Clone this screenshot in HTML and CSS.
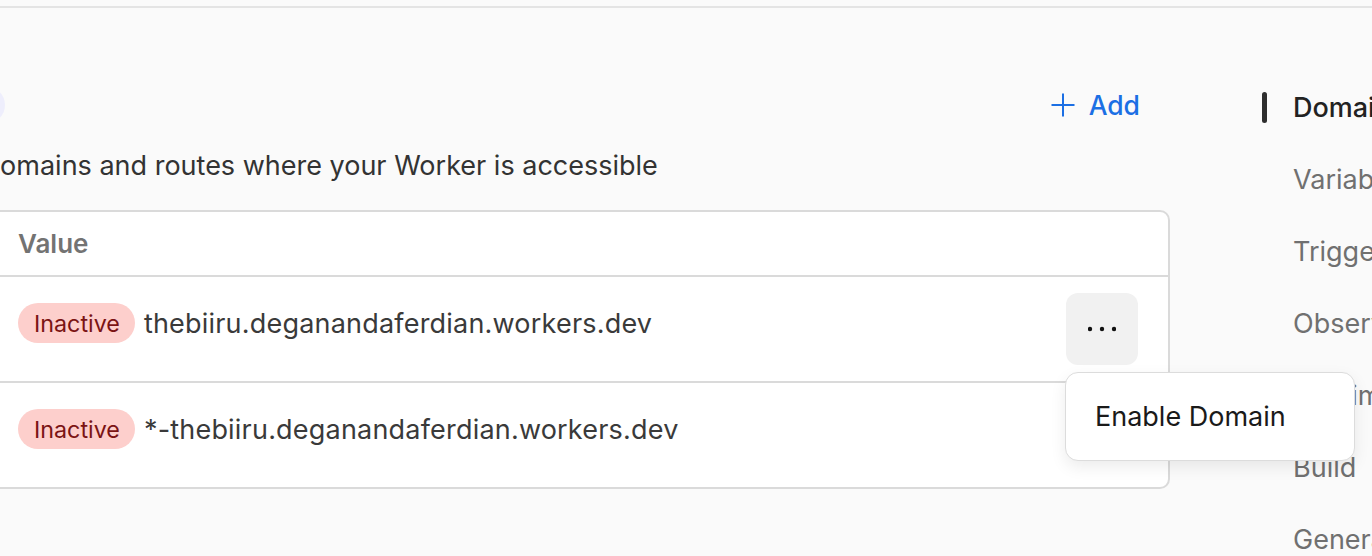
FILE: index.html
```html
<!DOCTYPE html>
<html lang="en">
<head>
<meta charset="utf-8">
<title>Domains &amp; Routes</title>
<link rel="stylesheet" href="styles.css">
</head>
<body>
<div class="topbar"></div>
<div class="layout">
  <main class="main">
    <div class="title-row">
      <div class="title-group">
        <h2 class="title">Domains &amp; Routes</h2>
        <span class="info-pill"></span>
      </div>
      <button class="add-btn" type="button">
        <svg class="plus" width="24" height="24" viewBox="0 0 24 24" aria-hidden="true">
          <path d="M12 0.5V23.5M0.5 12H23.5" stroke="currentColor" stroke-width="2" fill="none"/>
        </svg>
        <span>Add</span>
      </button>
    </div>
    <p class="desc">Define the domains, subdomains and routes where your Worker is accessible</p>

    <div class="table">
      <div class="trow thead">
        <div class="cell type">Type</div>
        <div class="cell value">Value</div>
        <div class="cell action"></div>
      </div>
      <div class="trow">
        <div class="cell type">workers.dev</div>
        <div class="cell value">
          <span class="badge">Inactive</span>
          <span class="domain">thebiiru.deganandaferdian.workers.dev</span>
        </div>
        <div class="cell action">
          <div class="menu-wrap">
            <button class="more-btn active" type="button" aria-label="More">
              <svg width="28" height="6" viewBox="0 0 28 6" aria-hidden="true">
                <circle cx="2" cy="3" r="2.2" fill="#111"/>
                <circle cx="14" cy="3" r="2.2" fill="#111"/>
                <circle cx="26" cy="3" r="2.2" fill="#111"/>
              </svg>
            </button>
            <div class="dropdown">Enable Domain</div>
          </div>
        </div>
      </div>
      <div class="trow">
        <div class="cell type">Preview URLs</div>
        <div class="cell value">
          <span class="badge">Inactive</span>
          <span class="domain">*-thebiiru.deganandaferdian.workers.dev</span>
        </div>
        <div class="cell action">
          <button class="more-btn" type="button" aria-label="More">
            <svg width="28" height="6" viewBox="0 0 28 6" aria-hidden="true">
              <circle cx="2" cy="3" r="2.2" fill="#111"/>
              <circle cx="14" cy="3" r="2.2" fill="#111"/>
              <circle cx="26" cy="3" r="2.2" fill="#111"/>
            </svg>
          </button>
        </div>
      </div>
    </div>
  </main>

  <nav class="sidenav">
    <a class="nav-item active">Domains &amp; Routes</a>
    <a class="nav-item">Variables and Secrets</a>
    <a class="nav-item">Trigger Events</a>
    <a class="nav-item">Observability</a>
    <a class="nav-item">Runtime</a>
    <a class="nav-item">Build</a>
    <a class="nav-item">General</a>
  </nav>
</div>
</body>
</html>
```

FILE: styles.css
```css
* { box-sizing: border-box; }

html, body {
  margin: 0;
  padding: 0;
}

body {
  width: 1372px;
  height: 556px;
  overflow: hidden;
  background: #fafafa;
  font-family: Inter, "Noto Sans", "Liberation Sans", sans-serif;
  font-size: 27px;
  color: #313131;
}

.topbar {
  height: 8px;
  border-bottom: 2px solid #e4e4e4;
}

.layout {
  display: flex;
  align-items: flex-start;
  padding-top: 77px;
}

.main {
  flex: none;
  width: 1496px;
  margin-left: -326px;
}

.title-row {
  display: flex;
  align-items: center;
  justify-content: space-between;
  height: 40px;
}

.title-group {
  display: flex;
  align-items: center;
  gap: 22px;
}

.title {
  margin: 0;
  font-size: 31px;
  font-weight: 600;
  color: #222;
}

.info-pill {
  width: 38px;
  height: 38px;
  border-radius: 50%;
  background: #eeeefc;
}

.add-btn {
  display: flex;
  align-items: center;
  gap: 14px;
  margin-right: 30px;
  padding: 0;
  border: 0;
  background: none;
  font: inherit;
  font-size: 26.5px;
  font-weight: 500;
  color: #1b6fe4;
}

.plus { display: block; }

.desc {
  margin: 23px 0 0;
  line-height: 36px;
  color: #333;
}

.table {
  margin-top: 26px;
  background: #fff;
  border: 2px solid #dadada;
  border-radius: 10px;
}

.trow {
  display: grid;
  grid-template-columns: 324px 1fr auto;
  border-top: 2px solid #dadada;
}

.trow.thead {
  border-top: 0;
  height: 63px;
  align-items: center;
}

.thead .cell {
  font-size: 26px;
  font-weight: 600;
  color: #737373;
}

.cell {
  padding-left: 24px;
}

.cell.value {
  padding-left: 18px;
}

.trow:not(.thead) .cell.type,
.trow:not(.thead) .cell.value {
  padding-top: 26px;
}

.cell.value {
  display: flex;
  align-items: center;
  gap: 9px;
  align-self: start;
}

.thead .cell.value { align-self: center; }

.cell.action {
  padding: 16px 30px 16px 0;
}

.thead .cell.action { padding: 0; }

.badge {
  display: inline-flex;
  align-items: center;
  height: 40px;
  padding: 0 15px 0 16px;
  border-radius: 20px;
  background: #fdcfcc;
  color: #7b1414;
  font-size: 23.3px;
}

.domain {
  color: #3a3a3a;
  font-size: 27px;
  letter-spacing: 0.2px;
}

.menu-wrap {
  position: relative;
}

.more-btn {
  display: flex;
  align-items: center;
  justify-content: center;
  width: 72px;
  height: 72px;
  padding: 0;
  border: 0;
  border-radius: 12px;
  background: transparent;
}

.more-btn.active {
  background: #f1f1f1;
}

.dropdown {
  position: absolute;
  top: 79px;
  left: -1px;
  z-index: 5;
  display: flex;
  align-items: center;
  width: 290px;
  height: 89px;
  padding: 0 29px;
  background: #fff;
  border: 1px solid #dcdcdc;
  border-radius: 13px;
  box-shadow: 0 6px 16px rgba(0, 0, 0, 0.08);
  color: #1a1a1a;
  font-size: 27px;
  white-space: nowrap;
}

.sidenav {
  flex: none;
  display: flex;
  flex-direction: column;
  gap: 36px;
  margin-left: 92px;
  padding-top: 4px;
}

.nav-item {
  display: flex;
  align-items: center;
  gap: 26px;
  height: 36px;
  color: #707070;
  white-space: nowrap;
}

.nav-item::before {
  content: "";
  flex: none;
  width: 5px;
  height: 31px;
  border-radius: 3px;
  background: transparent;
}

.nav-item.active {
  color: #222;
  font-weight: 500;
}

.nav-item.active::before {
  background: #2e2e2e;
}
```
